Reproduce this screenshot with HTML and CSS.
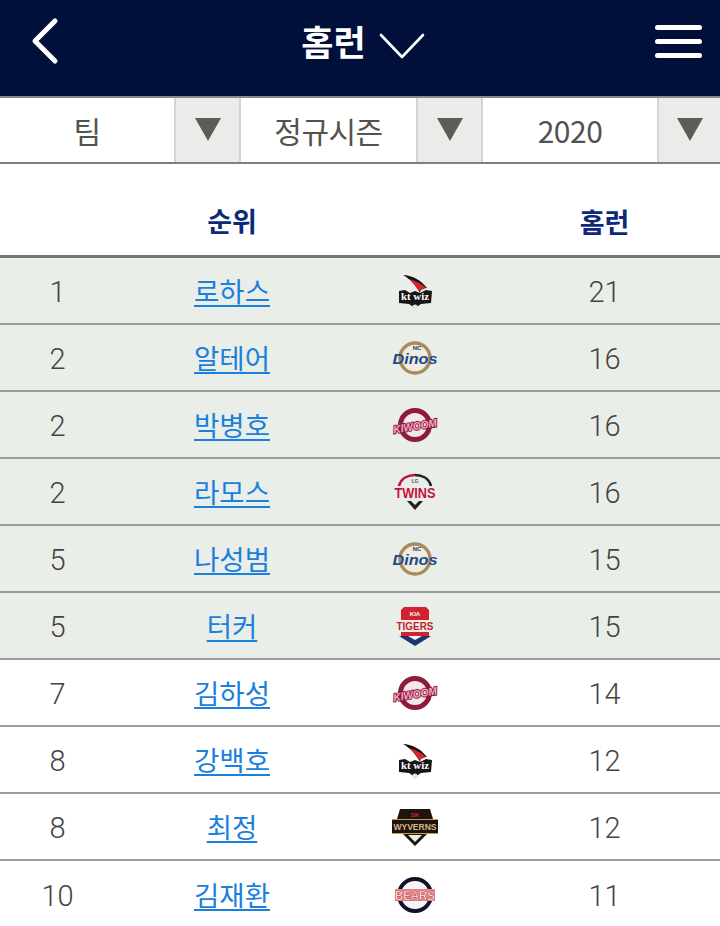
FILE: index.html
```html
<!DOCTYPE html>
<html lang="ko">
<head>
<meta charset="utf-8">
<title>홈런</title>
<link rel="stylesheet" href="styles.css">
</head>
<body>
<header class="topbar">
  <svg class="back" viewBox="0 0 30 48" width="30" height="48"><path d="M26 4 L6 24 L26 44" fill="none" stroke="#fff" stroke-width="5" stroke-linecap="round" stroke-linejoin="round"/></svg>
  <div class="title">
    <span>홈런</span>
    <svg class="chev" viewBox="0 0 46 28" width="46" height="28"><path d="M2 3 L23 25 L44 3" fill="none" stroke="#fff" stroke-width="2.6" stroke-linecap="round" stroke-linejoin="round"/></svg>
  </div>
  <div class="menu"><i></i><i></i><i></i></div>
</header>

<section class="filters">
  <div class="select"><span class="val">팀</span><span class="arrow"><b></b></span></div>
  <div class="select"><span class="val">정규시즌</span><span class="arrow"><b></b></span></div>
  <div class="select"><span class="val">2020</span><span class="arrow"><b></b></span></div>
</section>

<div class="thead">
  <span class="c-name">순위</span>
  <span class="c-hr">홈런</span>
</div>

<main class="list">
  <div class="row tint"><span class="c-rank">1</span><a class="c-name" href="#">로하스</a>
    <svg class="c-logo" viewBox="0 0 50 50"><path d="M13 9 C21 9 31 14 37 22 L31 22 L30 27 C26 19 20 13 13 9Z" fill="#111"/><path d="M20 13 C26 15 32 18 36 22 L29 25 Z" fill="#d8232f"/><path d="M9 25 L15 24 L20 27 L25 25 L30 27 L36 24 L42 25 L41 37 L31 38 L25 42 L19 38 L9 37Z" fill="#161616"/><text x="25" y="34" class="lg lg-kt" textLength="28" lengthAdjust="spacingAndGlyphs">kt wiz</text><circle cx="25" cy="41" r="2.6" fill="#f3dede"/></svg>
    <span class="c-hr">21</span></div>
  <div class="row tint"><span class="c-rank">2</span><a class="c-name" href="#">알테어</a>
    <svg class="c-logo" viewBox="0 0 50 50"><circle cx="25" cy="25" r="15" fill="#efece0" stroke="#a68c5a" stroke-width="3.4"/><text x="27" y="17" class="lg lg-ncs">NC</text><text x="25" y="31" class="lg lg-dinos" textLength="45" lengthAdjust="spacingAndGlyphs">Dinos</text></svg>
    <span class="c-hr">16</span></div>
  <div class="row tint"><span class="c-rank">2</span><a class="c-name" href="#">박병호</a>
    <svg class="c-logo" viewBox="0 0 50 50"><circle cx="25" cy="25" r="14.5" fill="#f5e6ea" stroke="#8e1b38" stroke-width="5"/><text x="25" y="30" class="lg lg-kw" textLength="44" lengthAdjust="spacingAndGlyphs" transform="rotate(-9 25 26)">KIWOOM</text></svg>
    <span class="c-hr">16</span></div>
  <div class="row tint"><span class="c-rank">2</span><a class="c-name" href="#">라모스</a>
    <svg class="c-logo" viewBox="0 0 50 50"><path d="M9 19 C11 11 18 8 25 8" fill="none" stroke="#c5123e" stroke-width="2.6"/><path d="M25 8 C32 8 39 11 41 19" fill="none" stroke="#222" stroke-width="2.6"/><text x="25" y="16" class="lg lg-lgs">LG</text><text x="25" y="31" class="lg lg-twins" textLength="41" lengthAdjust="spacingAndGlyphs">TWINS</text><path d="M17 34 H33 L25 43Z" fill="#222"/><path d="M21 34 H29 L25 38Z" fill="#e9eee9"/></svg>
    <span class="c-hr">16</span></div>
  <div class="row tint"><span class="c-rank">5</span><a class="c-name" href="#">나성범</a>
    <svg class="c-logo" viewBox="0 0 50 50"><circle cx="25" cy="25" r="15" fill="#efece0" stroke="#a68c5a" stroke-width="3.4"/><text x="27" y="17" class="lg lg-ncs">NC</text><text x="25" y="31" class="lg lg-dinos" textLength="45" lengthAdjust="spacingAndGlyphs">Dinos</text></svg>
    <span class="c-hr">15</span></div>
  <div class="row tint"><span class="c-rank">5</span><a class="c-name" href="#">터커</a>
    <svg class="c-logo" viewBox="0 0 50 50"><path d="M11 9 L14 6 H36 L39 9 V19 H11Z" fill="#d3222f"/><text x="25" y="15" class="lg lg-kia">KIA</text><text x="25" y="29" class="lg lg-tigers" textLength="37" lengthAdjust="spacingAndGlyphs">TIGERS</text><path d="M11 31 H39 V36 L25 42 L11 36Z" fill="#d3222f"/><path d="M9 35 H41 L25 45Z" fill="#20356f"/><path d="M18 35 H32 L25 39Z" fill="#f4f4f4"/></svg>
    <span class="c-hr">15</span></div>
  <div class="row"><span class="c-rank">7</span><a class="c-name" href="#">김하성</a>
    <svg class="c-logo" viewBox="0 0 50 50"><circle cx="25" cy="25" r="14.5" fill="#f5e6ea" stroke="#8e1b38" stroke-width="5"/><text x="25" y="30" class="lg lg-kw" textLength="44" lengthAdjust="spacingAndGlyphs" transform="rotate(-9 25 26)">KIWOOM</text></svg>
    <span class="c-hr">14</span></div>
  <div class="row"><span class="c-rank">8</span><a class="c-name" href="#">강백호</a>
    <svg class="c-logo" viewBox="0 0 50 50"><path d="M13 9 C21 9 31 14 37 22 L31 22 L30 27 C26 19 20 13 13 9Z" fill="#111"/><path d="M20 13 C26 15 32 18 36 22 L29 25 Z" fill="#d8232f"/><path d="M9 25 L15 24 L20 27 L25 25 L30 27 L36 24 L42 25 L41 37 L31 38 L25 42 L19 38 L9 37Z" fill="#161616"/><text x="25" y="34" class="lg lg-kt" textLength="28" lengthAdjust="spacingAndGlyphs">kt wiz</text><circle cx="25" cy="41" r="2.6" fill="#f3dede"/></svg>
    <span class="c-hr">12</span></div>
  <div class="row"><span class="c-rank">8</span><a class="c-name" href="#">최정</a>
    <svg class="c-logo" viewBox="0 0 50 50"><path d="M10 7 H40 L43 17 H48 V31 H38 L25 44 L12 31 H2 V17 H7Z" fill="#1d1410"/><path d="M2 17 H48 V18 H2Z" fill="#c59b5e"/><path d="M2 31 H48 V32 H2Z" fill="#c59b5e"/><text x="25" y="15" class="lg lg-skt">SK</text><text x="25" y="28" class="lg lg-wy">WYVERNS</text><path d="M18 33 H32 L25 40Z" fill="#f2ede1"/></svg>
    <span class="c-hr">12</span></div>
  <div class="row last"><span class="c-rank">10</span><a class="c-name" href="#">김재환</a>
    <svg class="c-logo" viewBox="0 0 50 50"><circle cx="25" cy="25" r="16" fill="#f6f6f6" stroke="#12122a" stroke-width="4"/><path d="M5 19 H45 V31 H5Z" fill="#e8858b"/><text x="25" y="30" class="lg lg-bears" textLength="40" lengthAdjust="spacingAndGlyphs">BEARS</text></svg>
    <span class="c-hr">11</span></div>
</main>
</body>
</html>
```
FILE: styles.css
```css
* { box-sizing: border-box; }
html, body { margin: 0; padding: 0; }
body {
  width: 720px;
  height: 926px;
  overflow: hidden;
  background: #fff;
  color: #4a4a45;
  font-family: "Noto Sans CJK KR", "Noto Sans", sans-serif;
}

.topbar {
  height: 96px;
  background: #00103b;
  display: grid;
  grid-template-columns: 120px 1fr 120px;
  align-items: center;
  color: #fff;
  padding-bottom: 14px;
}
.back { margin-left: 29px; }
.title {
  display: flex;
  align-items: center;
  justify-content: center;
  gap: 13px;
  font-size: 35px;
  font-weight: 700;
  line-height: 48px;
  padding-left: 6px;
}
.chev { margin-top: 10px; }
.menu {
  display: flex;
  flex-direction: column;
  gap: 9px;
  justify-self: end;
  margin-right: 18px;
}
.menu i {
  display: block;
  width: 47px;
  height: 5px;
  border-radius: 3px;
  background: #fff;
}

.filters {
  height: 68px;
  display: grid;
  grid-template-columns: 241px 242px 237px;
  border-top: 2px solid #868a86;
  border-bottom: 2px solid #7d807c;
}
.select {
  display: grid;
  grid-template-columns: 1fr 67px;
}
.select:last-child { grid-template-columns: 1fr 63px; }
.val {
  display: flex;
  align-items: center;
  justify-content: center;
  font-size: 30px;
  color: #52534e;
  letter-spacing: -0.5px;
}
.arrow {
  background: #e9ece8;
  border-left: 2px solid #d3d5d1;
  border-right: 2px solid #d3d5d1;
  display: flex;
  justify-content: center;
  padding-top: 20px;
}
.select:last-child .arrow { border-right: 0; }
.arrow b {
  width: 0;
  height: 0;
  border-left: 13px solid transparent;
  border-right: 13px solid transparent;
  border-top: 23px solid #5b5c55;
}

.thead, .row {
  display: grid;
  grid-template-columns: 115px 234px 140px 1fr;
  align-items: center;
  text-align: center;
}
.thead {
  height: 94px;
  padding-top: 23px;
  border-bottom: 3px solid #73776f;
  font-size: 27px;
  font-weight: 700;
  color: #0d2a78;
}
.thead .c-name { grid-column: 2; }
.thead .c-hr { grid-column: 4; }

.row {
  height: 67px;
  border-bottom: 2px solid #9a9e99;
  font-size: 29px;
  color: #44443f;
}
.row.last { border-bottom: 0; }
.tint { background: #e9eee9; }
.c-rank, .c-hr { font-family: "Roboto", sans-serif; font-weight: 300; padding-top: 2px; }
.thead .c-hr { font-family: "Noto Sans CJK KR", sans-serif; font-weight: 700; padding-top: 0; }
.c-name {
  font-size: 27.5px;
  line-height: 38px;
  color: #1b7fdc;
  text-decoration: underline;
  text-decoration-thickness: 2px;
  text-underline-offset: 3px;
  justify-self: center;
  margin-bottom: 2px;
}
.thead .c-name { color: #0d2a78; text-decoration: none; font-size: 27px; margin-bottom: 0; }
.c-logo { width: 50px; height: 50px; justify-self: center; margin-right: 8px; }

.lg { text-anchor: middle; font-family: "Liberation Sans", sans-serif; font-weight: 700; }
.lg-kt { font-family: "Liberation Serif", serif; font-size: 11px; fill: #fff; }
.lg-ncs { font-size: 6px; fill: #1c3d6e; }
.lg-dinos { font-size: 15px; font-style: italic; fill: #1d4a86; }
.lg-kw { font-size: 11px; font-style: italic; fill: #f2a9c8; stroke: #8e1b38; stroke-width: 2px; paint-order: stroke; }
.lg-lgs { font-size: 5px; fill: #555; }
.lg-twins { font-size: 14px; fill: #c5123e; }
.lg-kia { font-size: 6px; fill: #fff; }
.lg-tigers { font-size: 11px; fill: #c8202d; }
.lg-skt { font-size: 6px; fill: #d3222f; }
.lg-wy { font-size: 8.5px; fill: #dcb884; }
.lg-bears { font-size: 12px; fill: #fff; stroke: #b9272f; stroke-width: .5px; }
```
